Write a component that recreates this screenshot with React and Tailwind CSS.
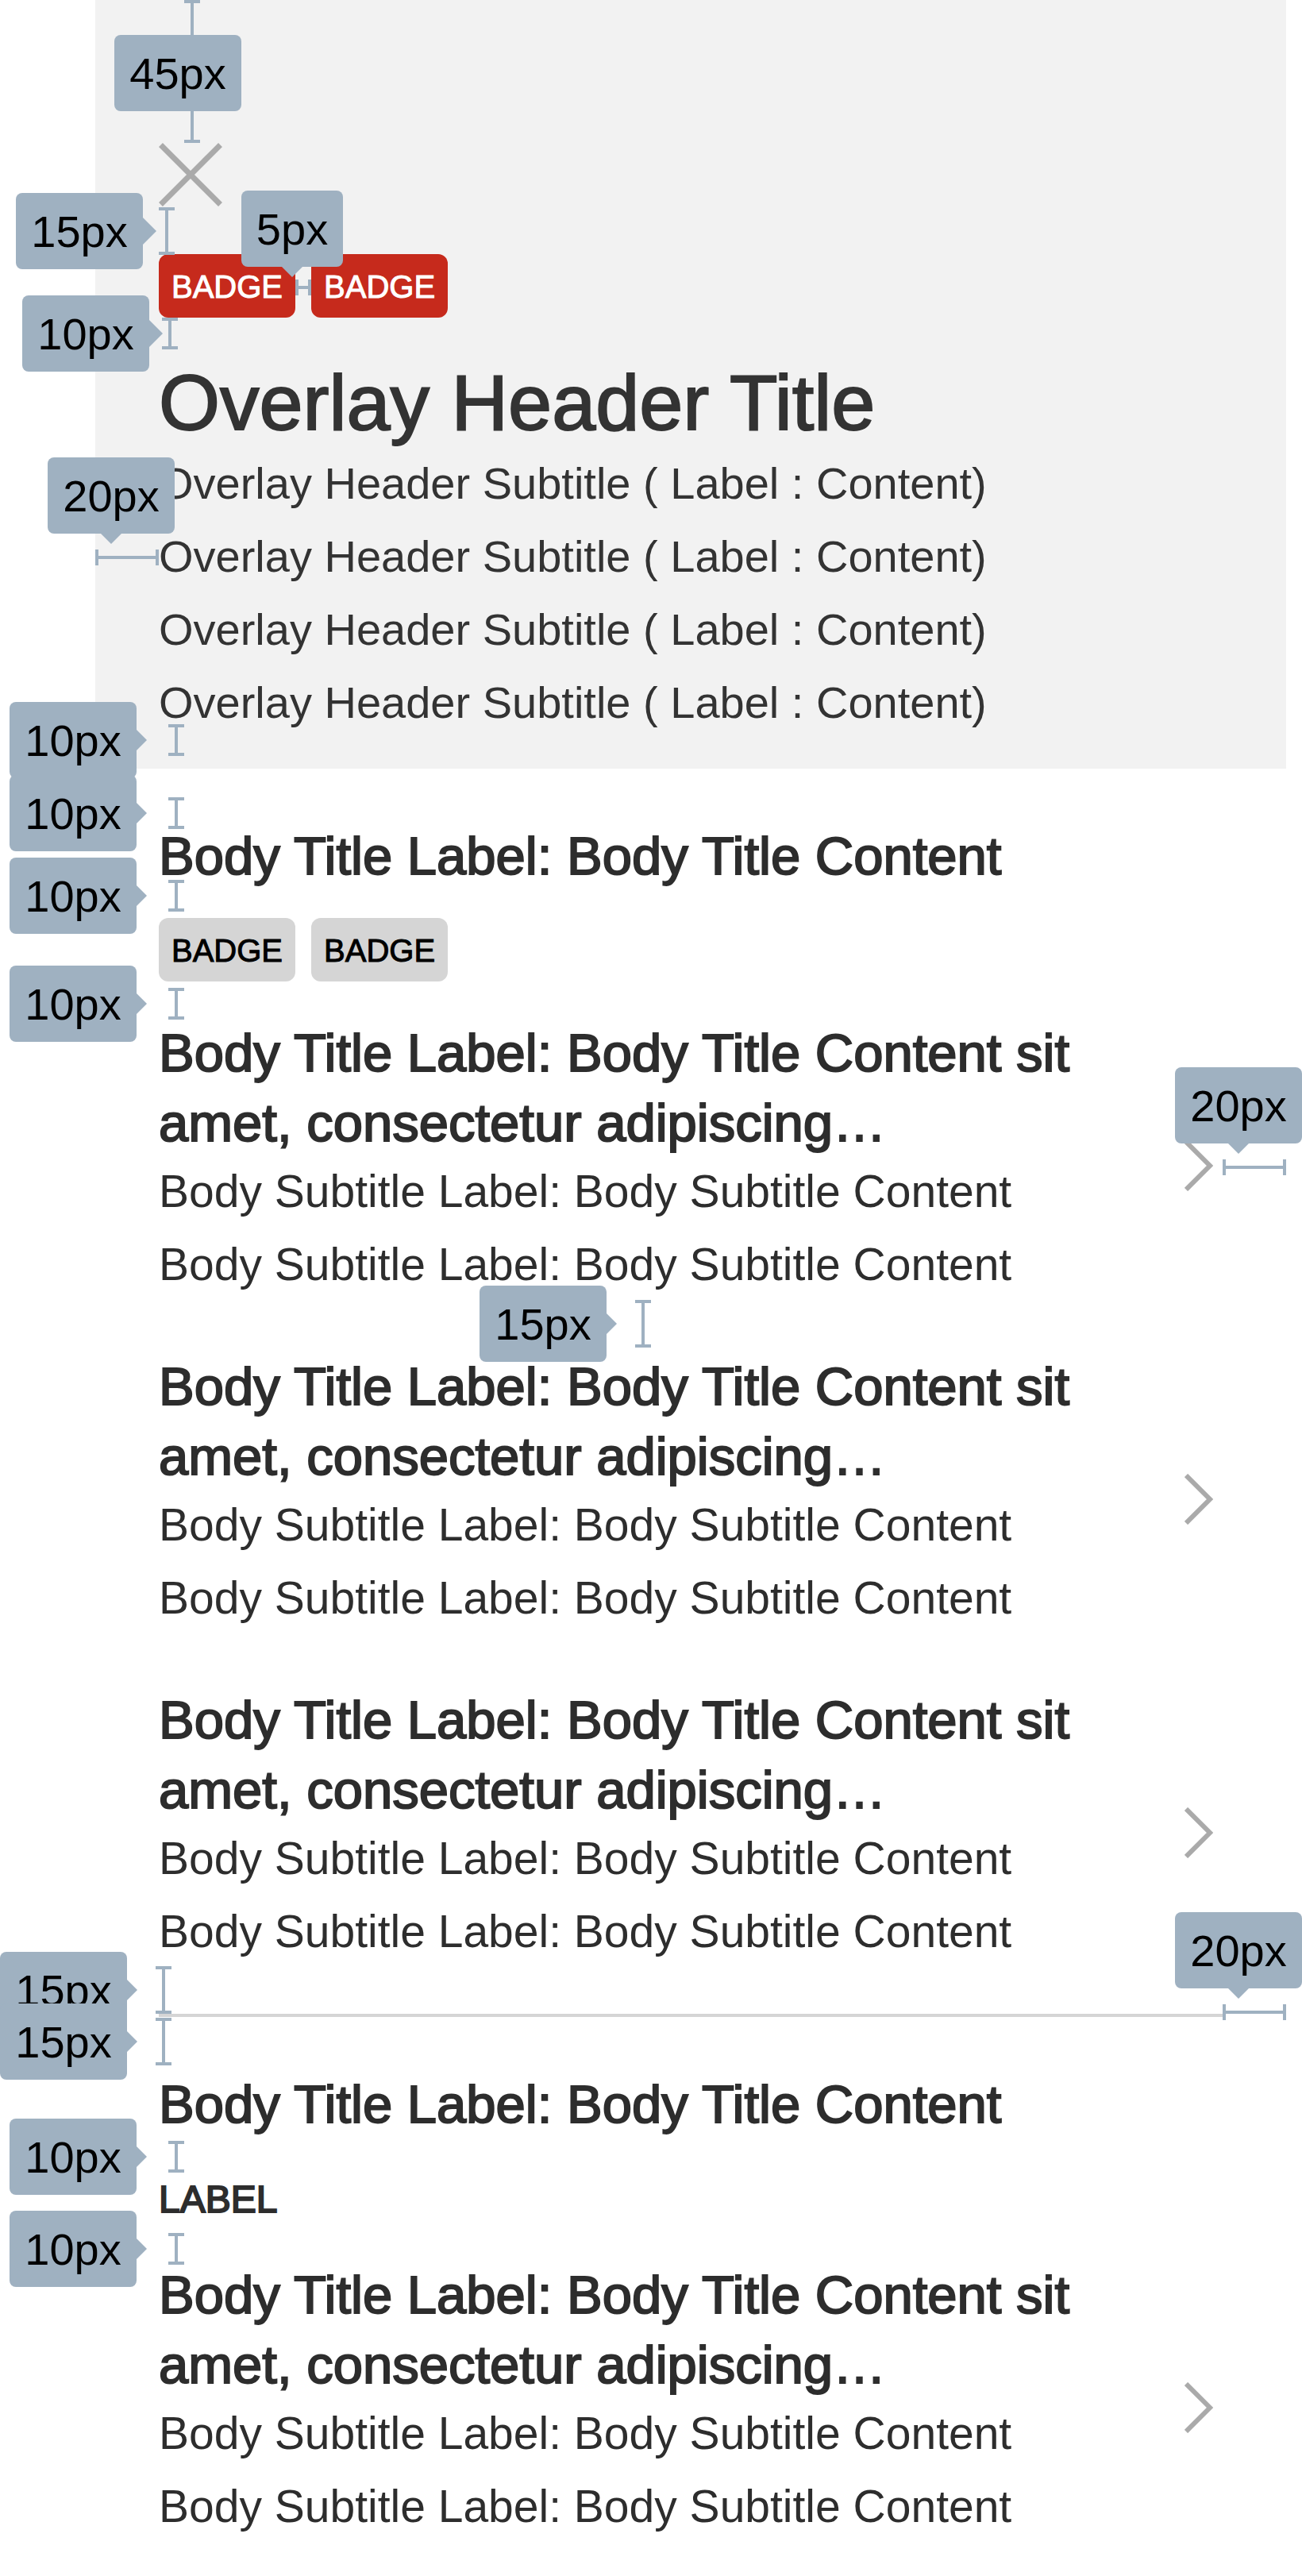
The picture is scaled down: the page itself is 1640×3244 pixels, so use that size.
import React from "react";

const MEDIUM = "[-webkit-text-stroke:2px_currentColor]";

function VBracket({ className }) {
  return (
    <span className={`flex w-5 shrink-0 flex-col items-center ${className}`}>
      <span className="h-1 w-full bg-[#9fb1c1]" />
      <span className="w-1 flex-1 bg-[#9fb1c1]" />
      <span className="h-1 w-full bg-[#9fb1c1]" />
    </span>
  );
}

function HBracket({ className }) {
  return (
    <span className={`flex h-5 shrink-0 items-center ${className}`}>
      <span className="h-full w-1 bg-[#9fb1c1]" />
      <span className="h-1 flex-1 bg-[#9fb1c1]" />
      <span className="h-full w-1 bg-[#9fb1c1]" />
    </span>
  );
}

function Tag({ children, arrow, className = "w-40" }) {
  return (
    <span
      className={`relative block shrink-0 rounded-lg bg-[#9fb1c1] pt-0.5 text-center text-[56px] leading-[94px] text-black ${className}`}
    >
      {children}
      {arrow === "right" && (
        <svg className="absolute top-1/2 left-full -mt-[13px]" width="13" height="26" viewBox="0 0 13 26" aria-hidden="true">
          <path d="M0 0L13 13L0 26Z" fill="#9fb1c1" />
        </svg>
      )}
      {arrow === "right-large" && (
        <svg className="absolute top-1/2 left-full -mt-[17px]" width="17" height="34" viewBox="0 0 17 34" aria-hidden="true">
          <path d="M0 0L17 17L0 34Z" fill="#9fb1c1" />
        </svg>
      )}
      {arrow === "down" && (
        <svg className="absolute top-full left-1/2 -ml-[13px]" width="26" height="13" viewBox="0 0 26 13" aria-hidden="true">
          <path d="M0 0L13 13L26 0Z" fill="#9fb1c1" />
        </svg>
      )}
    </span>
  );
}

function SideNote({ label, className, bracket, arrow = "right" }) {
  return (
    <div className={`absolute flex items-center ${className}`}>
      <Tag arrow={arrow}>{label}</Tag>
      <VBracket className={bracket} />
    </div>
  );
}

function TopNote({ label, className, bracket, tag = "w-40" }) {
  return (
    <div className={`absolute flex flex-col items-start ${className}`}>
      <Tag arrow="down" className={tag}>
        {label}
      </Tag>
      <HBracket className={bracket} />
    </div>
  );
}

function Badges({ className }) {
  return (
    <div className="flex gap-5">
      {["first", "second"].map((key) => (
        <span
          key={key}
          className={`rounded-xl px-4 pt-0.5 text-[40px] leading-[78px] [-webkit-text-stroke:1px_currentColor] ${className}`}
        >
          BADGE
        </span>
      ))}
    </div>
  );
}

function BodyTitle({ children }) {
  return <h2 className={`text-[67px] leading-[88px] ${MEDIUM}`}>{children}</h2>;
}

function Item() {
  return (
    <a href="#item" className="flex items-center justify-between gap-20 pr-3">
      <div className="min-w-0">
        <h3 className={`text-[67px] leading-[88px] ${MEDIUM}`}>
          Body Title Label: Body Title Content sit amet, consectetur adipiscing…
        </h3>
        <div className="-mt-1 text-[57px] leading-[92px]">
          <p>Body Subtitle Label: Body Subtitle Content</p>
          <p>Body Subtitle Label: Body Subtitle Content</p>
        </div>
      </div>
      <svg className="mt-4 shrink-0" width="36" height="64" viewBox="0 0 36 64" fill="none" stroke="#aaaaaa" strokeWidth="6" aria-hidden="true">
        <path d="M2 2L32 32L2 62" />
      </svg>
    </a>
  );
}

export default function App() {
  return (
    <main className="bg-white pb-[42px] font-['Liberation_Sans',Arial,sans-serif] text-[#2d2d2d]">
      <header className="relative pr-5 pl-[120px] text-[#333333]">
        <div className="bg-[#f2f2f2] px-20 pt-[180px] pb-[37px]">
          <button type="button" aria-label="Close" className="block">
            <svg width="80" height="80" viewBox="0 0 80 80" fill="none" stroke="#aaaaaa" strokeWidth="7" aria-hidden="true">
              <path d="M2.5 2.5L77.5 77.5M77.5 2.5L2.5 77.5" />
            </svg>
          </button>
          <div className="mt-[60px]">
            <Badges className="bg-[#c62a1c] text-white" />
          </div>
          <h1 className={`mt-[51px] text-[99px] leading-[112px] ${MEDIUM}`}>Overlay Header Title</h1>
          <div className="text-[56px] leading-[92px]">
            <p>Overlay Header Subtitle ( Label : Content)</p>
            <p>Overlay Header Subtitle ( Label : Content)</p>
            <p>Overlay Header Subtitle ( Label : Content)</p>
            <p>Overlay Header Subtitle ( Label : Content)</p>
          </div>
        </div>

        <div className="absolute top-0 left-[232px] flex">
          <VBracket className="h-[180px]" />
        </div>
        <div className="absolute top-11 left-36">
          <Tag>45px</Tag>
        </div>
        <SideNote label="15px" arrow="right-large" className="top-[243px] left-5" bracket="ml-5 h-[60px]" />
        <TopNote label="5px" className="top-60 left-[304px]" tag="w-32" bracket="mt-4 ml-[68px] w-5" />
        <SideNote label="10px" arrow="right-large" className="top-[372px] left-7" bracket="ml-4 h-10" />
        <TopNote label="20px" className="top-[576px] left-[60px]" bracket="mt-5 ml-[60px] w-20" />
        <SideNote label="10px" className="top-[884px] left-3" bracket="ml-10 h-10" />
      </header>

      <section className="relative pr-[100px] pl-[200px]">
        <div className="border-b-4 border-[#d5d5d5] pt-[66px] pb-[58px]">
          <BodyTitle>Body Title Label: Body Title Content</BodyTitle>
          <div className="mt-[34px] mb-[46px]">
            <Badges className="bg-[#d5d5d5] text-black" />
          </div>
          <div className="flex flex-col gap-16">
            <Item />
            <Item />
            <Item />
          </div>
        </div>

        <SideNote label="10px" className="top-2 left-3" bracket="ml-10 h-10" />
        <SideNote label="10px" className="top-28 left-3" bracket="ml-10 h-10" />
        <SideNote label="10px" className="top-[248px] left-3" bracket="ml-10 h-10" />
        <TopNote label="20px" className="top-[376px] right-0" bracket="mt-5 ml-[60px] w-20" />
        <SideNote label="15px" className="top-[651px] left-[604px]" bracket="ml-9 h-[60px]" />
        <SideNote label="15px" className="-bottom-[14px] left-0" bracket="ml-9 h-[60px]" />
        <TopNote label="20px" className="-bottom-1 right-0" bracket="mt-5 ml-[60px] w-20" />
      </section>

      <section className="relative pt-[66px] pr-[100px] pl-[200px]">
        <BodyTitle>Body Title Label: Body Title Content</BodyTitle>
        <p className={`my-12 text-[48px] leading-[56px] ${MEDIUM}`}>LABEL</p>
        <Item />

        <SideNote label="15px" className="-top-[17px] left-0" bracket="ml-9 h-[60px]" />
        <SideNote label="10px" className="top-32 left-3" bracket="ml-10 h-10" />
        <SideNote label="10px" className="top-[244px] left-3" bracket="ml-10 h-10" />
      </section>
    </main>
  );
}
